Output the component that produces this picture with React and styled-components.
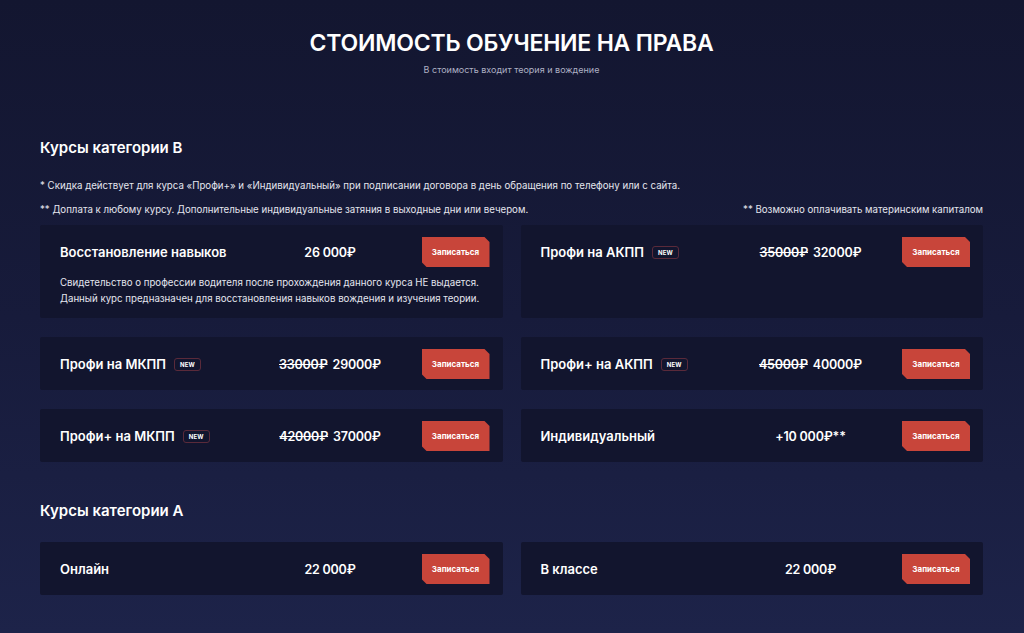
import React from 'react';
import styled, { createGlobalStyle } from 'styled-components';

const GlobalStyle = createGlobalStyle`
  html, body {
    margin: 0;
    padding: 0;
  }
  body {
    background: linear-gradient(180deg, #131630 0%, #171b3b 50%, #1d2349 100%);
    min-height: 633px;
    font-family: Inter, "Noto Sans", sans-serif;
    color: #ffffff;
  }
`;

const Page = styled.div`
  width: 943px;
  margin-left: 40px;
  padding: 27px 0 38px;
`;

const Header = styled.header`
  text-align: center;
  margin-bottom: 62px;
`;

const Title = styled.h1`
  margin: 0;
  font-size: 23px;
  font-weight: 600;
  letter-spacing: -0.2px;
  line-height: 32px;
`;

const Subtitle = styled.p`
  margin: 5px 0 0;
  font-size: 9px;
  color: #aeb1c4;
`;

const SectionTitle = styled.h2`
  margin: 0 0 ${p => p.gap}px;
  font-size: 15px;
  font-weight: 600;
  line-height: 22px;
`;

const NoteRow = styled.div`
  display: flex;
  justify-content: space-between;
  font-size: 9.7px;
  color: #e4e5ee;
  line-height: 14px;
  margin-bottom: ${p => p.after}px;
`;

const Grid = styled.div`
  display: grid;
  grid-template-columns: 1fr 1fr;
  column-gap: 18px;
  row-gap: 19px;
  margin-bottom: ${p => p.after}px;
`;

const Card = styled.div`
  background: #12152e;
  padding: 12px 13px 11px 20px;
  border-radius: 2px;
`;

const Row = styled.div`
  display: grid;
  grid-template-columns: 200px 140px 1fr;
  align-items: center;
  height: 30px;
`;

const Name = styled.div`
  display: flex;
  align-items: center;
  gap: 8px;
  font-size: 13px;
  font-weight: 600;
`;

const Badge = styled.span`
  font-size: 6px;
  font-weight: 700;
  letter-spacing: 0.2px;
  padding: 2px 5px;
  border: 1px solid #5a2a3a;
  border-radius: 3px;
  line-height: 7px;
`;

const Price = styled.div`
  text-align: center;
  font-size: 12.5px;
  font-weight: 600;
  letter-spacing: -0.2px;
  white-space: nowrap;
`;

const OldPrice = styled.s`
  margin-right: 5px;
`;

const Button = styled.button`
  justify-self: end;
  width: 68px;
  height: 30px;
  border: none;
  background: #c8453a;
  color: #ffffff;
  font-family: inherit;
  font-size: 8px;
  font-weight: 700;
  clip-path: polygon(0 0, calc(100% - 5px) 0, 100% 5px, 100% 100%, 5px 100%, 0 calc(100% - 5px));
  cursor: pointer;
`;

const Description = styled.p`
  margin: 8px 0 0;
  font-size: 9.7px;
  line-height: 16px;
  color: #e4e5ee;
`;

const categoryB = [
  {
    name: 'Восстановление навыков',
    price: '26 000₽',
    text: [
      'Свидетельство о профессии водителя после прохождения данного курса НЕ выдается.',
      'Данный курс предназначен для восстановления навыков вождения и изучения теории.',
    ],
  },
  { name: 'Профи на АКПП', isNew: true, old: '35000₽', price: '32000₽' },
  { name: 'Профи на МКПП', isNew: true, old: '33000₽', price: '29000₽' },
  { name: 'Профи+ на АКПП', isNew: true, old: '45000₽', price: '40000₽' },
  { name: 'Профи+ на МКПП', isNew: true, old: '42000₽', price: '37000₽' },
  { name: 'Индивидуальный', price: '+10 000₽**' },
];

const categoryA = [
  { name: 'Онлайн', price: '22 000₽' },
  { name: 'В классе', price: '22 000₽' },
];

function CourseCard({ course }) {
  return (
    <Card>
      <Row>
        <Name>
          {course.name}
          {course.isNew && <Badge>NEW</Badge>}
        </Name>
        <Price>
          {course.old && <OldPrice>{course.old}</OldPrice>}
          {course.price}
        </Price>
        <Button>Записаться</Button>
      </Row>
      {course.text && (
        <Description>
          {course.text[0]}
          <br />
          {course.text[1]}
        </Description>
      )}
    </Card>
  );
}

export default function App() {
  return (
    <Page>
      <GlobalStyle />
      <Header>
        <Title>СТОИМОСТЬ ОБУЧЕНИЕ НА ПРАВА</Title>
        <Subtitle>В стоимость входит теория и вождение</Subtitle>
      </Header>

      <SectionTitle gap={20}>Курсы категории B</SectionTitle>
      <NoteRow after={10}>
        <span>* Скидка действует для курса «Профи+» и «Индивидуальный» при подписании договора в день обращения по телефону или с сайта.</span>
      </NoteRow>
      <NoteRow after={8}>
        <span>** Доплата к любому курсу. Дополнительные индивидуальные затяния в выходные дни или вечером.</span>
        <span>** Возможно оплачивать материнским капиталом</span>
      </NoteRow>
      <Grid after={38}>
        {categoryB.map(c => <CourseCard key={c.name} course={c} />)}
      </Grid>

      <SectionTitle gap={20}>Курсы категории A</SectionTitle>
      <Grid after={0}>
        {categoryA.map(c => <CourseCard key={c.name} course={c} />)}
      </Grid>
    </Page>
  );
}
